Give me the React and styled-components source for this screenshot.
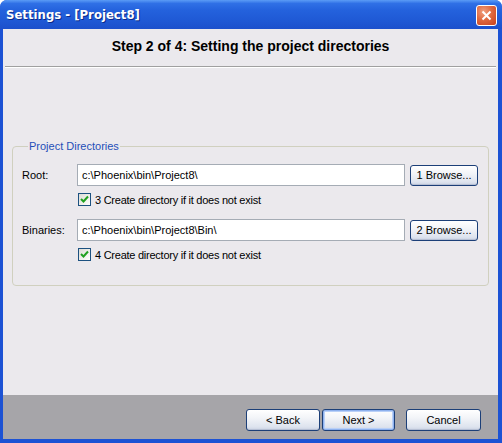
import React from "react";
import styled, { createGlobalStyle } from "styled-components";

const Global = createGlobalStyle`
  html, body { margin: 0; padding: 0; background: #ffffff; }
  body { font-family: "Liberation Sans", Arial, sans-serif; font-size: 11px; }
  * { box-sizing: border-box; }
`;

const Window = styled.div`
  width: 502px;
  height: 443px;
  display: flex;
  flex-direction: column;
  background: #1c52d4;
  border-radius: 7px 7px 0 0;
  overflow: hidden;
`;

const TitleBar = styled.div`
  height: 29px;
  flex: none;
  display: flex;
  align-items: center;
  justify-content: space-between;
  padding: 0 5px 0 6px;
  background: linear-gradient(
    #5b9cf6 0%,
    #2f70e6 12%,
    #2462dd 35%,
    #1f59d5 70%,
    #1c50cc 100%
  );
`;

const Title = styled.span`
  color: #ffffff;
  font-family: "DejaVu Sans Condensed", "DejaVu Sans", sans-serif;
  font-weight: bold;
  font-size: 13px;
  text-shadow: 1px 1px 0 #0c2a8a;
`;

const CloseButton = styled.div`
  width: 21px;
  height: 21px;
  border-radius: 3px;
  border: 1px solid #ffffff;
  background: radial-gradient(circle at 35% 30%, #f0a080 0%, #e06a40 45%, #c8401c 100%);
  display: flex;
  align-items: center;
  justify-content: center;
  margin-top: 1px;
`;

const Body = styled.div`
  flex: 1;
  display: flex;
  flex-direction: column;
  margin: 0 4px 4px 3px;
  background: #ebe9ed;
`;

const Header = styled.div`
  height: 37px;
  display: flex;
  align-items: center;
  justify-content: center;
  font-weight: bold;
  font-size: 14px;
  color: #000000;
  padding-bottom: 4px;
`;

const Separator = styled.div`
  height: 2px;
  margin: 0 2px;
  border-top: 1px solid #a0a0a0;
  border-bottom: 1px solid #ffffff;
`;

const Main = styled.div`
  flex: 1;
  padding: 72px 11px 0 9px;
`;

const Group = styled.fieldset`
  margin: 0;
  padding: 12px 10px 11px 9px;
  border: 1px solid #d0d0bf;
  border-radius: 4px;
`;

const Legend = styled.legend`
  color: #1f4fb8;
  padding: 0 1px;
  margin-left: 6px;
  font-size: 11px;
`;

const FieldRow = styled.div`
  display: flex;
  align-items: center;
  height: 22px;
`;

const Label = styled.span`
  width: 55px;
  flex: none;
  color: #000;
`;

const TextInput = styled.div`
  width: 328px;
  height: 22px;
  border: 1px solid #a5acb5;
  background: #ffffff;
  display: flex;
  align-items: center;
  padding-left: 4px;
  color: #000;
`;

const Button = styled.button`
  font-family: "Liberation Sans", Arial, sans-serif;
  font-size: 11px;
  color: #000;
  width: ${(p) => p.$w || 70}px;
  height: ${(p) => p.$h || 22}px;
  padding: 0;
  border: 1px solid #1c3f78;
  border-radius: 3px;
  background: linear-gradient(#ffffff 0%, #f2f4f8 40%, #dde3ee 85%, #c9d1e2 100%);
  box-shadow: ${(p) =>
    p.$default
      ? "inset 0 0 0 1px #8eb1ee, inset 0 0 0 2px #b9d0f7"
      : "inset 0 -1px 0 #b7c0d4"};
  margin-left: ${(p) => p.$ml || 0}px;
`;

const CheckRow = styled.label`
  display: flex;
  align-items: center;
  gap: 4px;
  margin: 7px 0 13px 56px;
  height: 13px;
  color: #000;
  letter-spacing: -0.25px;
`;

const Box = styled.span`
  width: 13px;
  height: 13px;
  border: 1px solid #1c5180;
  background: linear-gradient(135deg, #dcdcd6 0%, #f4f4f0 70%, #ffffff 100%);
  display: flex;
  align-items: center;
  justify-content: center;
`;

const Footer = styled.div`
  height: 44px;
  flex: none;
  background: #a6a5a9;
  display: flex;
  align-items: center;
  justify-content: flex-end;
  padding: 6px 17px 0 0;
`;

function Check() {
  return (
    <Box>
      <svg width="9" height="9" viewBox="0 0 9 9">
        <path d="M1 4 L3.5 6.5 L8 1.5" stroke="#21a121" strokeWidth="2" fill="none" />
      </svg>
    </Box>
  );
}

function Field({ label, value, btn }) {
  return (
    <FieldRow>
      <Label>{label}</Label>
      <TextInput>{value}</TextInput>
      <Button $w={68} $h={21} $ml={5}>{btn}</Button>
    </FieldRow>
  );
}

export default function App() {
  return (
    <>
      <Global />
      <Window>
        <TitleBar>
          <Title>Settings - [Project8]</Title>
          <CloseButton>
            <svg width="11" height="11" viewBox="0 0 11 11">
              <path d="M1.5 1.5 L9.5 9.5 M9.5 1.5 L1.5 9.5" stroke="#fff" strokeWidth="2" />
            </svg>
          </CloseButton>
        </TitleBar>
        <Body>
          <Header>Step 2 of 4: Setting the project directories</Header>
          <Separator />
          <Main>
            <Group>
              <Legend>Project Directories</Legend>
              <Field label="Root:" value="c:\Phoenix\bin\Project8\" btn="1 Browse..." />
              <CheckRow>
                <Check />
                3 Create directory if it does not exist
              </CheckRow>
              <Field label="Binaries:" value="c:\Phoenix\bin\Project8\Bin\" btn="2 Browse..." />
              <CheckRow>
                <Check />
                4 Create directory if it does not exist
              </CheckRow>
            </Group>
          </Main>
          <Footer>
            <Button $w={74}>&lt; Back</Button>
            <Button $w={73} $default $ml={2}>Next &gt;</Button>
            <Button $w={75} $ml={11}>Cancel</Button>
          </Footer>
        </Body>
      </Window>
    </>
  );
}
